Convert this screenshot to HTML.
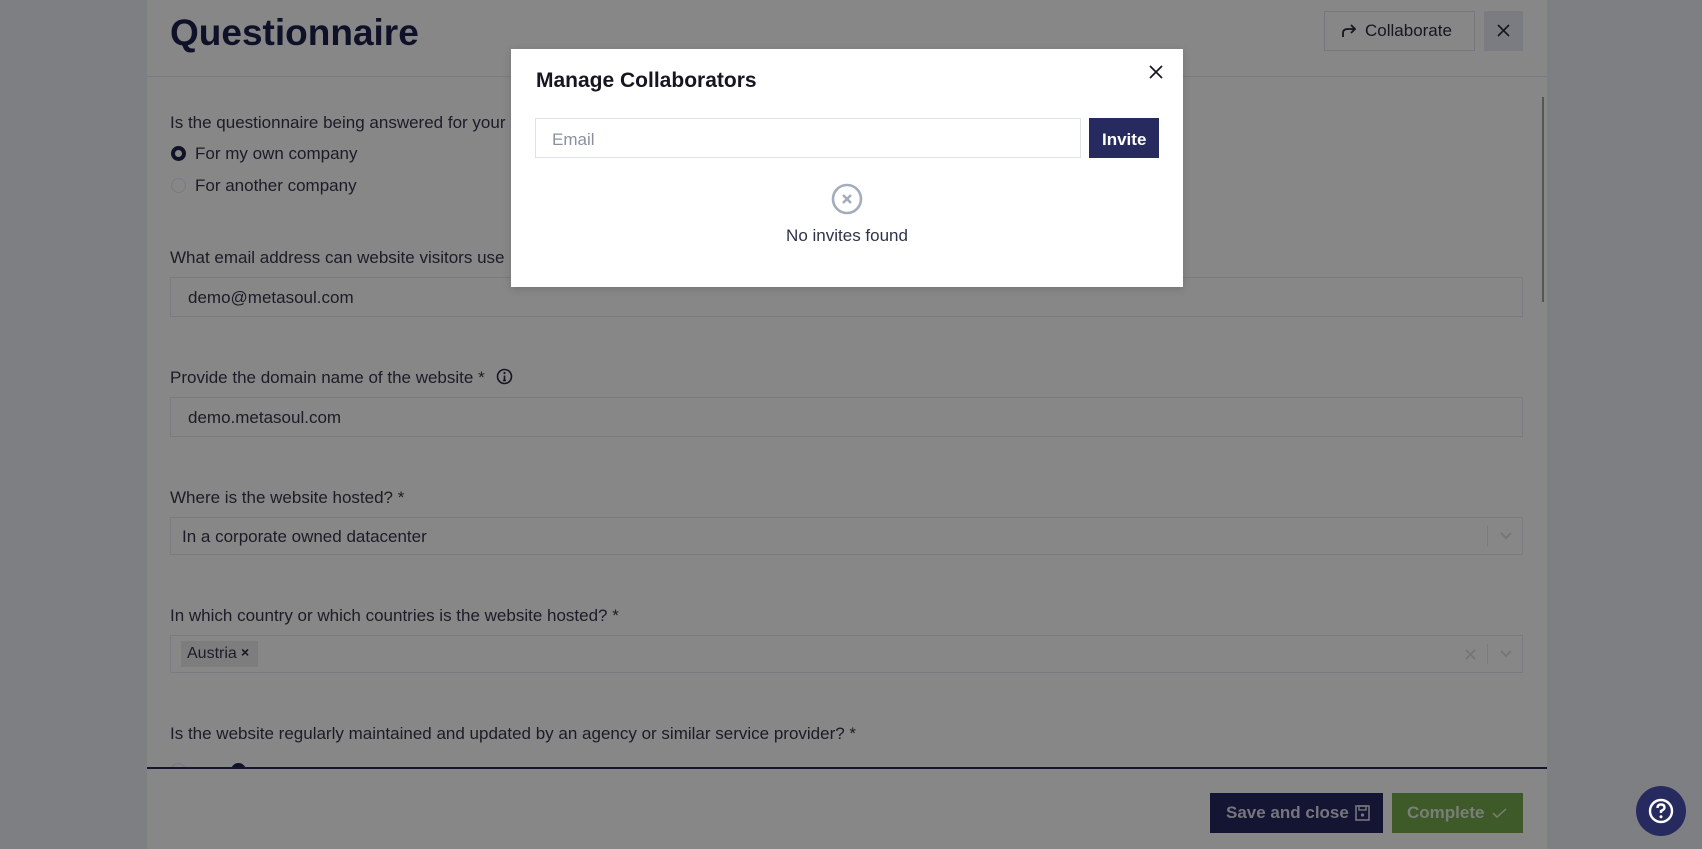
<!DOCTYPE html>
<html><head><meta charset="utf-8"><style>
*{box-sizing:border-box;margin:0;padding:0}
body{width:1702px;height:849px;overflow:hidden;background:#7e7f83;font-family:"Liberation Sans",sans-serif;position:relative}
.panel{position:absolute;left:147px;top:0;width:1400px;height:849px;background:#878787}
.abs{position:absolute}
.t{color:#1c1c28;font-size:17px;white-space:nowrap}
.field{position:absolute;left:170px;width:1353px;border:1px solid #7a7b80;background:#878787}
.val{position:absolute;left:17px;font-size:17px;color:#1c1c28}
.radio{position:absolute;width:15px;height:15px;border-radius:50%}
</style></head><body>
<div class="panel"></div>
<div class="abs" style="left:170px;top:12px;font-size:37px;font-weight:bold;color:#0f1129">Questionnaire</div>
<div class="abs" style="left:1324px;top:11px;width:151px;height:40px;border:1px solid #76777c"></div>
<svg class="abs" style="left:1340px;top:24px" width="18" height="14" viewBox="0 0 18 14"><path d="M3 13 V9 Q3 5 8 5 H15 M11 1 L15 5 L11 9" fill="none" stroke="#15161f" stroke-width="1.8"/></svg>
<div class="abs t" style="left:1365px;top:21px;font-size:17px;color:#15161f">Collaborate</div>
<div class="abs" style="left:1484px;top:11px;width:39px;height:40px;background:#7b7c81"></div>
<svg class="abs" style="left:1497px;top:24px" width="13" height="13"><path d="M1 1L12 12M12 1L1 12" stroke="#15161f" stroke-width="1.6"/></svg>
<div class="abs" style="left:147px;top:76px;width:1400px;height:1px;background:#7a7b80"></div>
<div class="abs" style="left:1542px;top:97px;width:2px;height:205px;background:#555"></div>

<div class="abs t" style="left:170px;top:113px">Is the questionnaire being answered for your</div>
<div class="radio" style="left:171px;top:146px;border:4px solid #111228;background:#878787"></div>
<div class="abs t" style="left:195px;top:144px">For my own company</div>
<div class="radio" style="left:171px;top:178px;border:1px solid #7a7b80"></div>
<div class="abs t" style="left:195px;top:176px">For another company</div>

<div class="abs t" style="left:170px;top:248px">What email address can website visitors use</div>
<div class="field" style="top:277px;height:40px"><div class="val" style="top:10px">demo@metasoul.com</div></div>

<div class="abs t" style="left:170px;top:368px">Provide the domain name of the website *</div>
<svg class="abs" style="left:496px;top:368px" width="17" height="17"><circle cx="8.5" cy="8.5" r="7" fill="none" stroke="#15161f" stroke-width="1.6"/><path d="M8.5 7.5V12.5M7 12.5H10" stroke="#15161f" stroke-width="1.6"/><circle cx="8.5" cy="5" r="1.1" fill="#15161f"/></svg>
<div class="field" style="top:397px;height:40px"><div class="val" style="top:10px">demo.metasoul.com</div></div>

<div class="abs t" style="left:170px;top:488px">Where is the website hosted? *</div>
<div class="field" style="top:517px;height:38px"><div class="val" style="top:9px;left:11px">In a corporate owned datacenter</div>
<div class="abs" style="left:1316px;top:8px;width:1px;height:20px;background:#7a7b80"></div>
<svg class="abs" style="left:1328px;top:13px" width="14" height="9"><path d="M2 2L7 7L12 2" fill="none" stroke="#74757a" stroke-width="1.8"/></svg></div>

<div class="abs t" style="left:170px;top:606px">In which country or which countries is the website hosted? *</div>
<div class="field" style="top:635px;height:38px">
<div class="abs" style="left:10px;top:5px;width:77px;height:26px;background:#7d7d7e"></div>
<div class="val" style="top:9px;left:16px;font-size:16px">Austria</div>
<div class="abs" style="left:70px;top:8px;font-size:14px;color:#15161f;font-weight:bold">×</div>
<svg class="abs" style="left:1294px;top:13px" width="11" height="11"><path d="M1 1L10 10M10 1L1 10" stroke="#74757a" stroke-width="1.8"/></svg>
<div class="abs" style="left:1316px;top:8px;width:1px;height:20px;background:#7a7b80"></div>
<svg class="abs" style="left:1328px;top:13px" width="14" height="9"><path d="M2 2L7 7L12 2" fill="none" stroke="#74757a" stroke-width="1.8"/></svg></div>

<div class="abs t" style="left:170px;top:724px">Is the website regularly maintained and updated by an agency or similar service provider? *</div>
<div class="abs" style="left:147px;top:760px;width:1400px;height:7px;overflow:hidden"><div class="radio" style="left:24px;top:3px;border:1px solid #7a7b80"></div><div class="radio" style="left:84px;top:3px;background:#111228"></div></div>
<div class="abs" style="left:147px;top:767px;width:1400px;height:2px;background:#141630"></div>

<div class="abs" style="left:1210px;top:793px;width:173px;height:40px;background:#131532"></div>
<div class="abs" style="left:1226px;top:803px;font-size:17px;font-weight:bold;color:#75767e">Save and close</div>
<svg class="abs" style="left:1355px;top:805px" width="15" height="16"><rect x="1" y="1" width="13" height="14" fill="none" stroke="#75767e" stroke-width="1.6"/><rect x="4" y="1" width="7" height="4" fill="none" stroke="#75767e" stroke-width="1.4"/><circle cx="7.5" cy="10" r="1.6" fill="#75767e"/></svg>
<div class="abs" style="left:1392px;top:793px;width:131px;height:40px;background:#3d5a28"></div>
<div class="abs" style="left:1407px;top:803px;font-size:17px;font-weight:bold;color:#7a7f76">Complete</div>
<svg class="abs" style="left:1492px;top:808px" width="15" height="11"><path d="M1 5L5 9L14 1" fill="none" stroke="#7a7f76" stroke-width="1.5"/></svg>
<div class="abs" style="left:1636px;top:786px;width:50px;height:50px;border-radius:50%;background:#272a5e"></div>
<svg class="abs" style="left:1648px;top:798px" width="26" height="26"><circle cx="13" cy="13" r="11" fill="none" stroke="#fff" stroke-width="2.4"/><path d="M9.5 10Q9.5 6.5 13 6.5Q16.5 6.5 16.5 9.5Q16.5 11.5 13 13V15" fill="none" stroke="#fff" stroke-width="2.4"/><circle cx="13" cy="18.8" r="1.5" fill="#fff"/></svg>

<div class="abs" style="left:511px;top:49px;width:672px;height:238px;background:#fff;box-shadow:0 2px 8px rgba(0,0,0,.15)">
<div class="abs" style="left:25px;top:20px;font-size:21px;font-weight:bold;color:#15161f">Manage Collaborators</div>
<svg class="abs" style="left:638px;top:16px" width="14" height="14"><path d="M1 1L13 13M13 1L1 13" stroke="#15161f" stroke-width="1.7"/></svg>
<div class="abs" style="left:24px;top:69px;width:546px;height:40px;border:1px solid #dde2ea"></div>
<div class="abs" style="left:41px;top:81px;font-size:17px;color:#8b90a0">Email</div>
<div class="abs" style="left:578px;top:69px;width:70px;height:40px;background:#272a5e"></div>
<div class="abs" style="left:591px;top:81px;font-size:17px;font-weight:bold;color:#fff">Invite</div>
<svg class="abs" style="left:320px;top:134px" width="32" height="32"><circle cx="16" cy="16" r="14" fill="none" stroke="#a4adbe" stroke-width="2.6"/><path d="M12 12L20 20M20 12L12 20" stroke="#a4adbe" stroke-width="2.6"/></svg>
<div class="abs" style="left:0;width:672px;text-align:center;top:177px;font-size:17px;color:#30324a">No invites found</div>
</div>
</body></html>
